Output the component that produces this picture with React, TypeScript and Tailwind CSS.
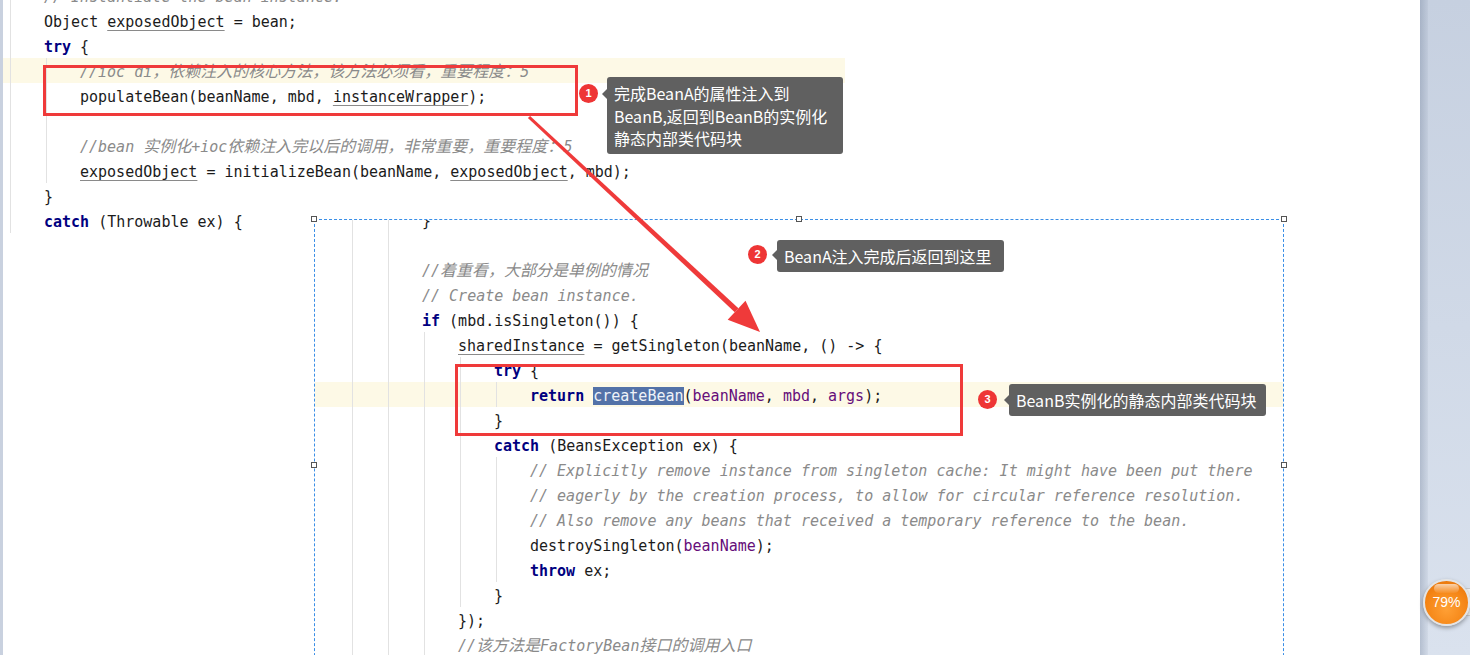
import React from "react";

const CJK = /([\u3000-\u303f\u4e00-\u9fff\uff00-\uffef]+)/;

function T({ s }: { s: string }) {
  const parts = s.split(CJK);
  return (
    <>
      {parts.map((p, i) =>
        i % 2 === 1 ? (
          <span key={i} className="text-[16px]">
            {p}
          </span>
        ) : (
          <React.Fragment key={i}>{p}</React.Fragment>
        )
      )}
    </>
  );
}

const K = ({ children }: { children: React.ReactNode }) => (
  <span className="font-bold text-[#000080]">{children}</span>
);
const U = ({ children }: { children: React.ReactNode }) => (
  <span className="underline decoration-[#8a8a8a] underline-offset-[3px]">{children}</span>
);
const P = ({ children }: { children: React.ReactNode }) => (
  <span className="text-[#660e7a]">{children}</span>
);
const C = ({ s }: { s: string }) => (
  <span className="italic text-[#8a8a8a]">
    <T s={s} />
  </span>
);

function Line({
  indent,
  guides = [],
  hl = false,
  children,
}: {
  indent: number;
  guides?: number[];
  hl?: boolean;
  children?: React.ReactNode;
}) {
  return (
    <div
      className={
        hl
          ? "flex h-[25px] items-center whitespace-pre bg-[#fdf9e6]"
          : "flex h-[25px] items-center whitespace-pre"
      }
    >
      {Array.from({ length: indent }, (_, i) => (
        <span key={i} className="flex h-full w-[36px] shrink-0 pl-[2px]">
          {guides.includes(i) ? <span className="h-full w-px bg-[#e2e2e2]" /> : null}
        </span>
      ))}
      <span className="relative top-[1.5px] whitespace-pre">{children}</span>
    </div>
  );
}

function Badge({ n }: { n: string }) {
  return (
    <div className="flex h-[19px] w-[19px] items-center justify-center rounded-full bg-[#ee3535] text-[11px] font-bold text-white [font-family:'Liberation_Sans',Arial,sans-serif]">
      {n}
    </div>
  );
}

function Callout({ children, tri }: { children: React.ReactNode; tri: number }) {
  return (
    <div className="relative h-full rounded-[3px] bg-[#606060] text-[16px] text-white [font-family:'Noto_Sans_CJK_SC','Noto_Sans',sans-serif]">
      <div
        className="absolute -left-[5px] h-0 w-0 border-y-[5px] border-r-[5px] border-y-transparent border-r-[#606060]"
        style={{ top: tri }}
      />
      {children}
    </div>
  );
}

const Handle = ({ cls }: { cls: string }) => (
  <div className={"absolute h-[6px] w-[6px] border border-[#555] bg-white " + cls} />
);

const codeFont = "[font-family:'DejaVu_Sans_Mono','Noto_Sans_CJK_SC',monospace]";

export default function App() {
  return (
    <div className="flex h-[655px] w-[1470px] overflow-hidden bg-white">
      <div className="w-[3px] shrink-0 bg-[#c9d1df]" />
      <div className="relative h-full flex-1 overflow-hidden bg-white">
        {/* Screenshot A */}
        <div className={"absolute left-0 top-0 h-[233px] w-[842px] overflow-hidden text-[15px] text-[#1b1b1b] " + codeFont}>
          <div className="-mt-[17px] pl-[5px]">
            <Line indent={1} guides={[0]}>
              <C s="// Instantiate the bean instance." />
            </Line>
            <Line indent={1} guides={[0]}>
              {"Object "}
              <U>exposedObject</U>
              {" = bean;"}
            </Line>
            <Line indent={1} guides={[0]}>
              <K>try</K>
              {" {"}
            </Line>
            <div className="-ml-[5px] bg-[#fdf9e6] pl-[5px]">
              <Line indent={2} guides={[0, 1]}>
                <C s="//ioc di，依赖注入的核心方法，该方法必须看，重要程度：5" />
              </Line>
            </div>
            <Line indent={2} guides={[0, 1]}>
              {"populateBean(beanName, mbd, "}
              <U>instanceWrapper</U>
              {");"}
            </Line>
            <Line indent={2} guides={[0, 1]} />
            <Line indent={2} guides={[0, 1]}>
              <C s="//bean 实例化+ioc依赖注入完以后的调用，非常重要，重要程度：5" />
            </Line>
            <Line indent={2} guides={[0, 1]}>
              <U>exposedObject</U>
              {" = initializeBean(beanName, "}
              <U>exposedObject</U>
              {", mbd);"}
            </Line>
            <Line indent={1} guides={[0]}>
              {"}"}
            </Line>
            <Line indent={1} guides={[0]}>
              <K>catch</K>
              {" (Throwable ex) {"}
            </Line>
          </div>
        </div>

        {/* Screenshot B */}
        <div className="absolute left-[311px] top-[219px] h-[492px] w-[970px] border border-dashed border-[#3a8ee6] bg-white">
          <div className={"h-full overflow-hidden text-[15px] text-[#1b1b1b] " + codeFont}>
            <div className="-ml-px -mt-[13px]">
              <Line indent={3} guides={[1, 2]}>
                {"}"}
              </Line>
              <Line indent={3} guides={[1, 2]} />
              <Line indent={3} guides={[1, 2]}>
                <C s="//着重看，大部分是单例的情况" />
              </Line>
              <Line indent={3} guides={[1, 2]}>
                <C s="// Create bean instance." />
              </Line>
              <Line indent={3} guides={[1, 2]}>
                <K>if</K>
                {" (mbd.isSingleton()) {"}
              </Line>
              <Line indent={4} guides={[1, 2, 3]}>
                <U>sharedInstance</U>
                {" = getSingleton(beanName, () -> {"}
              </Line>
              <Line indent={5} guides={[1, 2, 3, 4]}>
                <K>try</K>
                {" {"}
              </Line>
              <Line indent={6} guides={[1, 2, 3, 4, 5]} hl>
                <K>return</K>
                {" "}
                <span className="bg-[#5372a8] text-[#eef2f8]">createBean</span>
                {"("}
                <P>beanName</P>
                {", "}
                <P>mbd</P>
                {", "}
                <P>args</P>
                {");"}
              </Line>
              <Line indent={5} guides={[1, 2, 3, 4]}>
                {"}"}
              </Line>
              <Line indent={5} guides={[1, 2, 3, 4]}>
                <K>catch</K>
                {" (BeansException ex) {"}
              </Line>
              <Line indent={6} guides={[1, 2, 3, 4, 5]}>
                <C s="// Explicitly remove instance from singleton cache: It might have been put there" />
              </Line>
              <Line indent={6} guides={[1, 2, 3, 4, 5]}>
                <C s="// eagerly by the creation process, to allow for circular reference resolution." />
              </Line>
              <Line indent={6} guides={[1, 2, 3, 4, 5]}>
                <C s="// Also remove any beans that received a temporary reference to the bean." />
              </Line>
              <Line indent={6} guides={[1, 2, 3, 4, 5]}>
                {"destroySingleton("}
                <P>beanName</P>
                {");"}
              </Line>
              <Line indent={6} guides={[1, 2, 3, 4, 5]}>
                <K>throw</K>
                {" ex;"}
              </Line>
              <Line indent={5} guides={[1, 2, 3, 4]}>
                {"}"}
              </Line>
              <Line indent={4} guides={[1, 2, 3]}>
                {"});"}
              </Line>
              <Line indent={4} guides={[1, 2, 3]}>
                <C s="//该方法是FactoryBean接口的调用入口" />
              </Line>
            </div>
          </div>
          <Handle cls="-left-[4px] -top-[4px]" />
          <Handle cls="left-[481px] -top-[4px]" />
          <Handle cls="-right-[4px] -top-[4px]" />
          <Handle cls="-left-[4px] top-[242px]" />
          <Handle cls="-right-[4px] top-[242px]" />
        </div>

        {/* Red boxes */}
        <div className="absolute left-[40px] top-[65px] h-[51px] w-[535px] border-[3px] border-[#ef3a3a]" />
        <div className="absolute left-[452px] top-[364px] h-[72px] w-[508px] border-[3px] border-[#ef3a3a]" />

        {/* Arrow */}
        <svg className="pointer-events-none absolute left-0 top-0" width="1417" height="655" viewBox="0 0 1417 655">
          <polygon points="524.9,118.1 527.1,115.9 735.4,308.2 731.8,312.2" fill="#ef3a3a" />
          <polygon points="757,332 724.7,319.7 742.5,300.7" fill="#ef3a3a" />
        </svg>

        {/* Callout 1 */}
        <div className="absolute left-[576px] top-[84px]">
          <Badge n="1" />
        </div>
        <div className="absolute left-[604px] top-[77px] h-[77px] w-[236px]">
          <Callout tri={12}>
            <div className="px-[7px] py-[5px] leading-[22.5px]">
              完成BeanA的属性注入到
              <br />
              BeanB,返回到BeanB的实例化
              <br />
              静态内部类代码块
            </div>
          </Callout>
        </div>

        {/* Callout 2 */}
        <div className="absolute left-[745px] top-[245px]">
          <Badge n="2" />
        </div>
        <div className="absolute left-[774px] top-[240px] h-[32px] w-[227px]">
          <Callout tri={10}>
            <div className="whitespace-nowrap px-[7px] leading-[32px]">BeanA注入完成后返回到这里</div>
          </Callout>
        </div>

        {/* Callout 3 */}
        <div className="absolute left-[975px] top-[390px]">
          <Badge n="3" />
        </div>
        <div className="absolute left-[1006px] top-[384px] h-[32px] w-[257px]">
          <Callout tri={11}>
            <div className="whitespace-nowrap px-[7px] leading-[32px]">BeanB实例化的静态内部类代码块</div>
          </Callout>
        </div>
      </div>

      {/* Right strip */}
      <div className="relative flex h-full w-[50px] shrink-0 bg-[linear-gradient(to_bottom,#c6d0e0,#dae2ee)]">
        <div className="h-full w-[8px] bg-[linear-gradient(to_right,rgba(110,125,150,0.35),rgba(110,125,150,0.08))]" />
        <div className="absolute right-0 top-[588px] h-[28px] w-[6px] rounded-l-[3px] border border-r-0 border-[#c8c8c8] bg-[#eeeeee]" />
        <div className="absolute left-[3px] top-[579px] flex h-[47px] w-[47px] items-center justify-center rounded-full border-2 border-[#e4e4e4] bg-[radial-gradient(circle_at_50%_65%,#ffa035,#f48414_60%,#e06f08)] shadow-[0_2px_4px_rgba(0,0,0,0.35)]">
          <div className="absolute left-[9px] top-[3px] h-[9px] w-[25px] rounded-full bg-[linear-gradient(to_bottom,rgba(255,255,255,0.65),rgba(255,255,255,0.05))]" />
          <span className="relative text-[14px] text-white [font-family:'Liberation_Sans',Arial,sans-serif]">79%</span>
        </div>
      </div>
    </div>
  );
}
